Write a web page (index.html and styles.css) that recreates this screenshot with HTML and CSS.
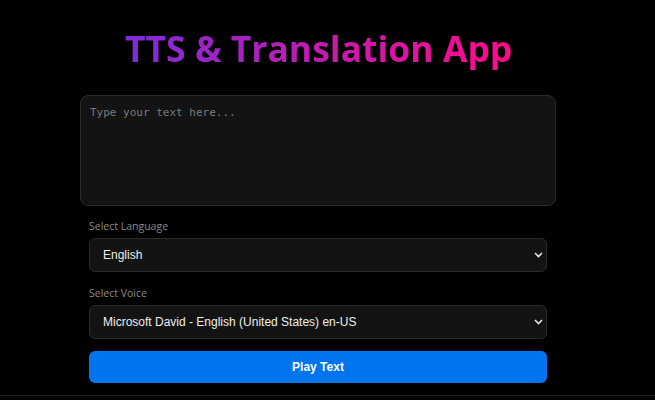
FILE: index.html
```html
<!DOCTYPE html>
<html lang="en">
<head>
<meta charset="utf-8">
<title>TTS & Translation App</title>
<link rel="stylesheet" href="styles.css">
</head>
<body>
<main class="app">
  <h1 class="title">TTS &amp; Translation App</h1>
  <textarea class="input" placeholder="Type your text here..."></textarea>
  <div class="fields">
    <div class="field">
      <label class="label" for="lang">Select Language</label>
      <div class="select-wrap">
        <select id="lang" class="select"><option>English</option></select>
        <svg class="chev" width="9" height="6" viewBox="0 0 9 6"><path d="M1 1l3.5 3.5L8 1" fill="none" stroke="#e6e6e6" stroke-width="1.6"/></svg>
      </div>
    </div>
    <div class="field">
      <label class="label" for="voice">Select Voice</label>
      <div class="select-wrap">
        <select id="voice" class="select"><option>Microsoft David - English (United States) en-US</option></select>
        <svg class="chev" width="9" height="6" viewBox="0 0 9 6"><path d="M1 1l3.5 3.5L8 1" fill="none" stroke="#e6e6e6" stroke-width="1.6"/></svg>
      </div>
    </div>
    <button class="play">Play Text</button>
  </div>
  <div class="rule"></div>
</main>
</body>
</html>
```
FILE: styles.css
```css
html, body {
  margin: 0;
  padding: 0;
  background: #000;
  height: 100%;
  overflow: hidden;
}
.app {
  width: 476px;
  margin-left: 80px;
  padding-top: 26px;
  font-family: "Open Sans", "Noto Sans", sans-serif;
}
.title {
  margin: 0 auto 25px;
  text-align: center;
  white-space: nowrap;
  font-size: 35.5px;
  line-height: 44px;
  font-weight: 700;
  background: linear-gradient(90deg, #7f2bd8 0%, #c21bb0 50%, #ff0a8a 100%);
  -webkit-background-clip: text;
  background-clip: text;
  color: transparent;
  width: 386px;
}
.input {
  display: block;
  box-sizing: border-box;
  width: 476px;
  height: 111px;
  margin: 0;
  padding: 9px 9px;
  background: #131313;
  border: 1px solid #2a2a2a;
  border-radius: 8px;
  color: #ddd;
  font-family: "DejaVu Sans Mono", "Liberation Mono", monospace;
  font-size: 11px;
  line-height: 16px;
  resize: none;
  outline: none;
}
.input::placeholder {
  color: #7a7a7a;
}
.fields {
  padding: 12px 9px 0 9px;
  display: flex;
  flex-direction: column;
}
.field {
  display: flex;
  flex-direction: column;
  margin-bottom: 13px;
}
.field + .field { margin-bottom: 12px; }
.label {
  font-size: 10.5px;
  line-height: 16px;
  color: #8a8a8a;
  margin-bottom: 4px;
}
.select-wrap {
  position: relative;
}
.select {
  -webkit-appearance: none;
  appearance: none;
  display: block;
  box-sizing: border-box;
  width: 100%;
  height: 34px;
  margin: 0;
  padding: 0 12px 0 13px;
  background: #131313;
  border: 1px solid #2a2a2a;
  border-radius: 6px;
  color: #eeeeee;
  font-family: "Liberation Sans", Arial, sans-serif;
  font-size: 12px;
  outline: none;
}
.chev {
  position: absolute;
  top: 14px;
  right: 4px;
}
.play {
  display: block;
  box-sizing: border-box;
  width: 100%;
  height: 32px;
  margin: 0;
  border: none;
  border-radius: 6px;
  background: #0073ef;
  color: #fff;
  font-family: "Liberation Sans", Arial, sans-serif;
  font-weight: 700;
  font-size: 12px;
  cursor: pointer;
}
.rule {
  margin-left: -80px;
  width: 655px;
  margin-top: 12px;
  border-top: 1px solid #1e1e1e;
}
```
